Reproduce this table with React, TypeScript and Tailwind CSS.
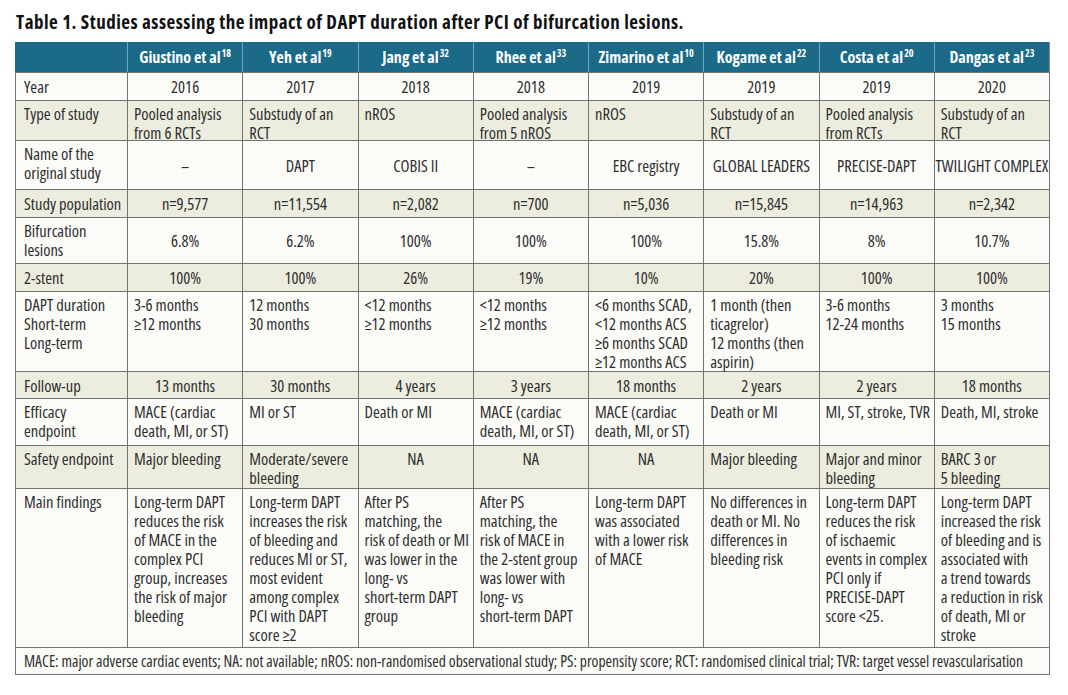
import React from "react";

type Align = "c" | "l" | "t";
type Row = { label: string; h: string; bg: string; cells: [string, Align][]; single?: boolean };

const WHITE = "bg-[#fbfbf8]";
const BEIGE = "bg-[#ececdf]";

const headers: [string, string][] = [
  ["Giustino et al", "18"],
  ["Yeh et al", "19"],
  ["Jang et al", "32"],
  ["Rhee et al", "33"],
  ["Zimarino et al", "10"],
  ["Kogame et al", "22"],
  ["Costa et al", "20"],
  ["Dangas et al", "23"],
];

const c = (s: string): [string, Align] => [s, "c"];
const l = (s: string): [string, Align] => [s, "l"];
const t = (s: string): [string, Align] => [s, "t"];

const rows: Row[] = [
  {
    label: "Year",
    h: "h-[28px]",
    bg: WHITE,
    single: true,
    cells: ["2016", "2017", "2018", "2018", "2019", "2019", "2019", "2020"].map(c),
  },
  {
    label: "Type of study",
    h: "h-[40px]",
    bg: BEIGE,
    cells: [
      "Pooled analysis\nfrom 6 RCTs",
      "Substudy of an\nRCT",
      "nROS",
      "Pooled analysis\nfrom 5 nROS",
      "nROS",
      "Substudy of an\nRCT",
      "Pooled analysis\nfrom RCTs",
      "Substudy of an\nRCT",
    ].map(l),
  },
  {
    label: "Name of the\noriginal study",
    h: "h-[49px]",
    bg: WHITE,
    cells: ["–", "DAPT", "COBIS II", "–", "EBC registry", "GLOBAL LEADERS", "PRECISE-DAPT", "TWILIGHT COMPLEX"].map(c),
  },
  {
    label: "Study population",
    h: "h-[28px]",
    bg: BEIGE,
    single: true,
    cells: ["n=9,577", "n=11,554", "n=2,082", "n=700", "n=5,036", "n=15,845", "n=14,963", "n=2,342"].map(c),
  },
  {
    label: "Bifurcation\nlesions",
    h: "h-[46px]",
    bg: WHITE,
    cells: ["6.8%", "6.2%", "100%", "100%", "100%", "15.8%", "8%", "10.7%"].map(c),
  },
  {
    label: "2-stent",
    h: "h-[28px]",
    bg: BEIGE,
    single: true,
    cells: ["100%", "100%", "26%", "19%", "10%", "20%", "100%", "100%"].map(c),
  },
  {
    label: "DAPT duration\nShort-term\nLong-term",
    h: "h-[80px]",
    bg: WHITE,
    cells: [
      "3-6 months\n≥12 months",
      "12 months\n30 months",
      "<12 months\n≥12 months",
      "<12 months\n≥12 months",
      "<6 months SCAD,\n<12 months ACS\n≥6 months SCAD\n≥12 months ACS",
      "1 month (then\nticagrelor)\n12 months (then\naspirin)",
      "3-6 months\n12-24 months",
      "3 months\n15 months",
    ].map(l),
  },
  {
    label: "Follow-up",
    h: "h-[27px]",
    bg: BEIGE,
    single: true,
    cells: ["13 months", "30 months", "4 years", "3 years", "18 months", "2 years", "2 years", "18 months"].map(c),
  },
  {
    label: "Efficacy\nendpoint",
    h: "h-[47px]",
    bg: WHITE,
    cells: [
      "MACE (cardiac\ndeath, MI, or ST)",
      "MI or ST",
      "Death or MI",
      "MACE (cardiac\ndeath, MI, or ST)",
      "MACE (cardiac\ndeath, MI, or ST)",
      "Death or MI",
      "MI, ST, stroke, TVR",
      "Death, MI, stroke",
    ].map(l),
  },
  {
    label: "Safety endpoint",
    h: "h-[43px]",
    bg: BEIGE,
    cells: [
      l("Major bleeding"),
      l("Moderate/severe\nbleeding"),
      t("NA"),
      t("NA"),
      t("NA"),
      l("Major bleeding"),
      l("Major and minor\nbleeding"),
      l("BARC 3 or\n5 bleeding"),
    ],
  },
  {
    label: "Main findings",
    h: "h-[159px]",
    bg: WHITE,
    cells: [
      "Long-term DAPT\nreduces the risk\nof MACE in the\ncomplex PCI\ngroup, increases\nthe risk of major\nbleeding",
      "Long-term DAPT\nincreases the risk\nof bleeding and\nreduces MI or ST,\nmost evident\namong complex\nPCI with DAPT\nscore ≥2",
      "After PS\nmatching, the\nrisk of death or MI\nwas lower in the\nlong- vs\nshort-term DAPT\ngroup",
      "After PS\nmatching, the\nrisk of MACE in\nthe 2-stent group\nwas lower with\nlong- vs\nshort-term DAPT",
      "Long-term DAPT\nwas associated\nwith a lower risk\nof MACE",
      "No differences in\ndeath or MI. No\ndifferences in\nbleeding risk",
      "Long-term DAPT\nreduces the risk\nof ischaemic\nevents in complex\nPCI only if\nPRECISE-DAPT\nscore <25.",
      "Long-term DAPT\nincreased the risk\nof bleeding and is\nassociated with\na trend towards\na reduction in risk\nof death, MI or\nstroke",
    ].map(l),
  },
];

function Cell({ text, align }: { text: string; align: Align }) {
  const pos =
    align === "c"
      ? "flex items-center justify-center text-center px-[2px]"
      : align === "t"
      ? "flex items-start justify-center text-center pt-[3px] px-[2px]"
      : "flex items-start justify-start pt-[3px] pl-[6px] pr-[1px]";
  return (
    <div className={`${pos} min-w-0 border-r border-[#737373] whitespace-pre`}>
      <span>{text}</span>
    </div>
  );
}

export default function App() {
  return (
    <div className="w-[1068px] h-[695px] bg-white text-[#2e2e2e] font-['Open_Sans',sans-serif] font-stretch-condensed">
      <div className="pt-[10px] pl-[16px] h-[42px]">
        <h1 className="text-[19px] leading-[24px] font-bold text-[#111] tracking-[0.5px]">
          Table 1. Studies assessing the impact of DAPT duration after PCI of bifurcation lesions.
        </h1>
      </div>
      <div className="ml-[15px] w-[1035px] text-[16.5px] leading-[19px]">
        <div className="grid grid-cols-[113px_repeat(8,minmax(0,1fr))] h-[30px] bg-[#1b6a88] text-white font-bold text-[16px]">
          <div className="border-r border-[#6ea4bd]" />
          {headers.map(([name, sup], i) => (
            <div
              key={i}
              className={`flex items-center justify-center whitespace-nowrap min-w-0 ${
                i < 7 ? "border-r border-[#6ea4bd]" : "border-r border-[#8a8a8a]"
              }`}
            >
              <span>{name}</span>
              <span className="text-[10px] leading-[10px] self-start mt-[6px] ml-[1px]">{sup}</span>
            </div>
          ))}
        </div>
        <div className="border-l border-[#737373]">
          {rows.map((r, ri) => (
            <div
              key={ri}
              className={`grid grid-cols-[112px_repeat(8,minmax(0,1fr))] ${r.h} ${r.bg} border-t border-[#737373]`}
            >
              <div
                className={`flex pl-[8px] border-r border-[#737373] whitespace-pre min-w-0 ${
                  r.single ? "items-center" : "items-start pt-[3px]"
                }`}
              >
                <span>{r.label}</span>
              </div>
              {r.cells.map(([txt, al], ci) => (
                <Cell key={ci} text={txt} align={al} />
              ))}
            </div>
          ))}
          <div className="h-[28px] border-t border-b border-r border-[#737373] bg-[#fbfbf8] flex items-center pl-[8px] whitespace-nowrap text-[15.6px]">
            MACE: major adverse cardiac events; NA: not available; nROS: non-randomised observational study; PS: propensity
            score; RCT: randomised clinical trial; TVR: target vessel revascularisation
          </div>
        </div>
      </div>
    </div>
  );
}
